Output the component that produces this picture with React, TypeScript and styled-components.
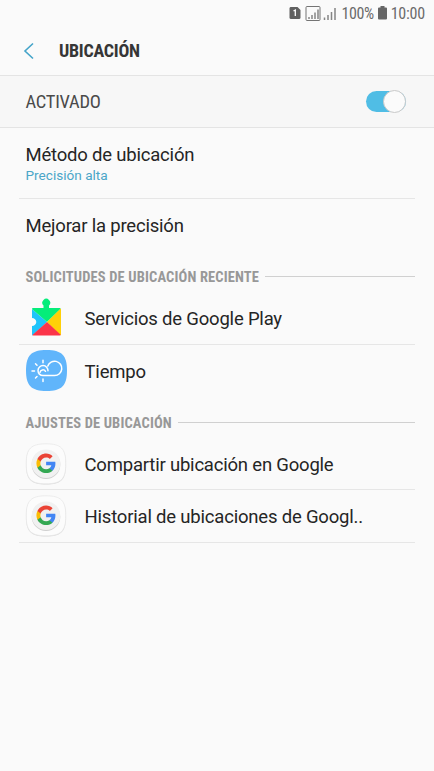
import React from 'react';
import styled, { createGlobalStyle } from 'styled-components';

const GlobalStyle = createGlobalStyle`
  *, *::before, *::after { box-sizing: border-box; }
  body { margin: 0; background: #fafafa; font-family: Roboto, sans-serif; color: #252525; }
`;

const Screen = styled.main`
  width: 434px;
  height: 771px;
  overflow: hidden;
  background: #fafafa;
`;

const Condensed = styled.span<{ $size: number; $weight?: number; $spacing?: number }>`
  font-family: 'Roboto Condensed', Roboto, sans-serif;
  font-stretch: 75%;
  font-size: ${p => p.$size}px;
  font-weight: ${p => p.$weight ?? 400};
  letter-spacing: ${p => p.$spacing ?? 0}px;
  white-space: nowrap;
`;

const StatusBar = styled.div`
  height: 27px;
  display: flex;
  justify-content: flex-end;
  align-items: center;
  padding-right: 9px;
  color: #6b6b6b;
  svg { display: block; }
`;

const StatusIcons = styled.svg`
  margin-right: 3px;
`;

const BatteryIcon = styled.svg`
  margin: 0 4px 1px 4px;
`;

const TitleBar = styled.header`
  height: 48px;
  display: flex;
  align-items: center;
  padding-left: 22px;
  color: #363636;
  h1 { margin: 0 0 1px; }
`;

const BackIcon = styled.svg`
  margin-right: 23px;
`;

const MasterSwitch = styled.section`
  height: 53px;
  display: flex;
  align-items: center;
  justify-content: space-between;
  padding: 0 28px 0 25.5px;
  background: #f7f7f7;
  border-top: 1px solid #e4e4e4;
  border-bottom: 1px solid #e4e4e4;
  color: #4a4a4a;
`;

const Toggle = styled.div`
  width: 40px;
  height: 21px;
  border-radius: 11px;
  background: #50bde5;
  display: flex;
  align-items: center;
  justify-content: flex-end;
`;

const Knob = styled.div`
  flex: none;
  width: 23px;
  height: 23px;
  border-radius: 50%;
  background: #fbfbfb;
  border: 1px solid #c9c9c9;
`;

const Content = styled.div`
  padding: 0 19px;
`;

const Row = styled.div<{ $height: number; $line?: boolean }>`
  height: ${p => p.$height}px;
  width: 396px;
  display: flex;
  align-items: center;
  padding-left: 6.5px;
  border-bottom: 1px solid ${p => (p.$line ? '#e6e6e6' : 'transparent')};
`;

const Label = styled.div<{ $drop?: number }>`
  font-size: 18.5px;
  line-height: 24px;
  padding-top: ${p => p.$drop ?? 0}px;
  letter-spacing: -0.2px;
  white-space: nowrap;
`;

const Hint = styled.div`
  font-size: 13.6px;
  line-height: 17px;
  color: #4ba6c8;
`;

const IconSlot = styled.div`
  width: 42px;
  height: 42px;
  margin: 0 17.5px 0 -0.5px;
  svg { display: block; }
`;

const SectionHeading = styled.div<{ $top: number }>`
  height: 40px;
  width: 396px;
  display: flex;
  align-items: center;
  padding: ${p => p.$top}px 0 0 6.5px;
  color: #989898;
  &::after {
    content: '';
    flex: 1;
    height: 1px;
    margin: -1px 0 0 6px;
    background: #d0d0d0;
  }
`;

const PlayServices = () => (
  <svg width="42" height="42" viewBox="0 0 42 42">
    <path d="M7 11L22 24L7.500 37.500Q7 37 7 36V28A4.300 4 0 1 0 7 20Z" fill="#1fc4fb" />
    <path d="M7 11Q7 10 8 10H18.500V7.500A3.900 3.900 0 1 1 24 7.500V10H35L35.700 10.800L22 24Z" fill="#05ed7a" />
    <path d="M35.700 10.500Q36 10.500 36 11V36Q36 37 35.500 37.500L22 24Z" fill="#ffd008" />
    <path d="M22 24L35.700 36.700Q35.500 37.500 34.500 37.500H8.500Q8 37.500 7.400 37Z" fill="#fb3449" />
  </svg>
);

const Weather = () => (
  <svg width="42" height="42" viewBox="0 0 42 42">
    <path d="M21.500 0C36.500 0 42 5 42 20.500S36.500 41 21.500 41S1 36 1 20.500S6.500 0 21.500 0Z" fill="#60b5fb" />
    <g fill="none" stroke="#fff" strokeWidth="1.500" strokeLinecap="round">
      <path d="M23 20.800A5 5 0 1 0 18 25.600H29.600A7.200 7.200 0 1 0 22.800 16" />
      <path d="M15 22.300A3 3 0 0 1 20.500 21.300" />
      <path d="M18 10.300V12.700M10.500 13.700L12 15.200M7 21H9.500M10.500 28L12 26.500M18 29V31.500" />
    </g>
  </svg>
);

const Google = () => (
  <svg width="42" height="42" viewBox="0 0 42 42">
    <path d="M21 1.500C36 1.500 41 6 41 21.500S36 41.500 21 41.500S1 37 1 21.500S6 1.500 21 1.500Z" fill="#d8d8d8" />
    <path d="M21 .8C36 .8 40.800 5.500 40.800 20.800S36 40.800 21 40.800S1.200 36 1.200 20.800S6 .8 21 .8Z" fill="#fcfcfc" stroke="#e8e8e8" strokeWidth=".8" />
    <circle cx="21" cy="21.700" r="14.300" fill="#cfcfcf" />
    <circle cx="21" cy="20.700" r="14.300" fill="#f1f1f1" />
    <g transform="translate(11.400 10.600) scale(.81)">
      <path fill="#4285f4" d="M23.490 12.270c0-.79-.07-1.540-.19-2.270H12v4.510h6.470c-.29 1.480-1.140 2.730-2.400 3.580v3h3.860c2.260-2.090 3.560-5.170 3.560-8.820z" />
      <path fill="#34a853" d="M12 24c3.240 0 5.950-1.080 7.930-2.910l-3.860-3c-1.080.72-2.450 1.160-4.070 1.160-3.130 0-5.780-2.110-6.730-4.960H1.290v3.090C3.260 21.300 7.310 24 12 24z" />
      <path fill="#fbbc05" d="M5.270 14.290c-.25-.72-.38-1.490-.38-2.290s.14-1.570.38-2.290V6.620H1.290C.47 8.240 0 10.060 0 12s.47 3.760 1.290 5.380l3.980-3.090z" />
      <path fill="#ea4335" d="M12 4.750c1.770 0 3.350.61 4.600 1.800l3.420-3.420C17.950 1.190 15.240 0 12 0 7.310 0 3.260 2.700 1.290 6.620l3.980 3.090C6.220 6.860 8.870 4.750 12 4.750z" />
    </g>
  </svg>
);

export default function App() {
  return (
    <>
      <GlobalStyle />
      <Screen>
        <StatusBar>
          <StatusIcons width="49" height="16" viewBox="0 0 49 16">
            <path d="M1.500 1H8.500L11.500 4V11.500Q11.500 13 10 13H2Q.5 13 .5 11.500V2.500Q.5 1 1.500 1Z" fill="#606060" />
            <path d="M4.500 5L6.300 4V10" stroke="#fff" strokeWidth="1.300" fill="none" />
            <rect x="17" y=".5" width="14" height="14" rx="1" stroke="#747474" fill="none" />
            <path d="M20 11V13M23 9V13M26 6.500V13M29 3.500V13M35.500 11.500V14M39 9V14M42.500 6V14M46 2V14" stroke="#858585" strokeWidth="1.500" />
          </StatusIcons>
          <Condensed $size={16} $spacing={-0.4}>100%</Condensed>
          <BatteryIcon width="9" height="14" viewBox="0 0 9 14">
            <path d="M2.500 0H6.500V1.500H8Q9 1.500 9 2.500V12.500Q9 13.500 8 13.500H1Q0 13.500 0 12.500V2.500Q0 1.500 1 1.500H2.500Z" fill="#666" />
          </BatteryIcon>
          <Condensed $size={16} $spacing={-0.2}>10:00</Condensed>
        </StatusBar>
        <TitleBar>
          <BackIcon width="14" height="18" viewBox="0 0 14 18">
            <path d="M11 1.500L3 9L11 16.500" fill="none" stroke="#44a4c9" strokeWidth="1.600" />
          </BackIcon>
          <Condensed as="h1" $size={18} $weight={700} $spacing={-0.25}>UBICACIÓN</Condensed>
        </TitleBar>
        <MasterSwitch>
          <Condensed $size={18.5} $spacing={-0.25}>ACTIVADO</Condensed>
          <Toggle role="switch" aria-checked="true"><Knob /></Toggle>
        </MasterSwitch>
        <Content>
          <Row $height={71} $line>
            <div>
              <Label>Método de ubicación</Label>
              <Hint>Precisión alta</Hint>
            </div>
          </Row>
          <Row $height={54}><Label>Mejorar la precisión</Label></Row>
          <SectionHeading $top={8}>
            <Condensed $size={14.5} $weight={700} $spacing={0.14}>SOLICITUDES DE UBICACIÓN RECIENTE</Condensed>
          </SectionHeading>
          <Row $height={52} $line>
            <IconSlot><PlayServices /></IconSlot>
            <Label>Servicios de Google Play</Label>
          </Row>
          <Row $height={53}>
            <IconSlot><Weather /></IconSlot>
            <Label $drop={2}>Tiempo</Label>
          </Row>
          <SectionHeading $top={10}>
            <Condensed $size={14.5} $weight={700} $spacing={0.14}>AJUSTES DE UBICACIÓN</Condensed>
          </SectionHeading>
          <Row $height={52} $line>
            <IconSlot><Google /></IconSlot>
            <Label $drop={2}>Compartir ubicación en Google</Label>
          </Row>
          <Row $height={53} $line>
            <IconSlot><Google /></IconSlot>
            <Label $drop={2}>Historial de ubicaciones de Googl..</Label>
          </Row>
        </Content>
      </Screen>
    </>
  );
}
